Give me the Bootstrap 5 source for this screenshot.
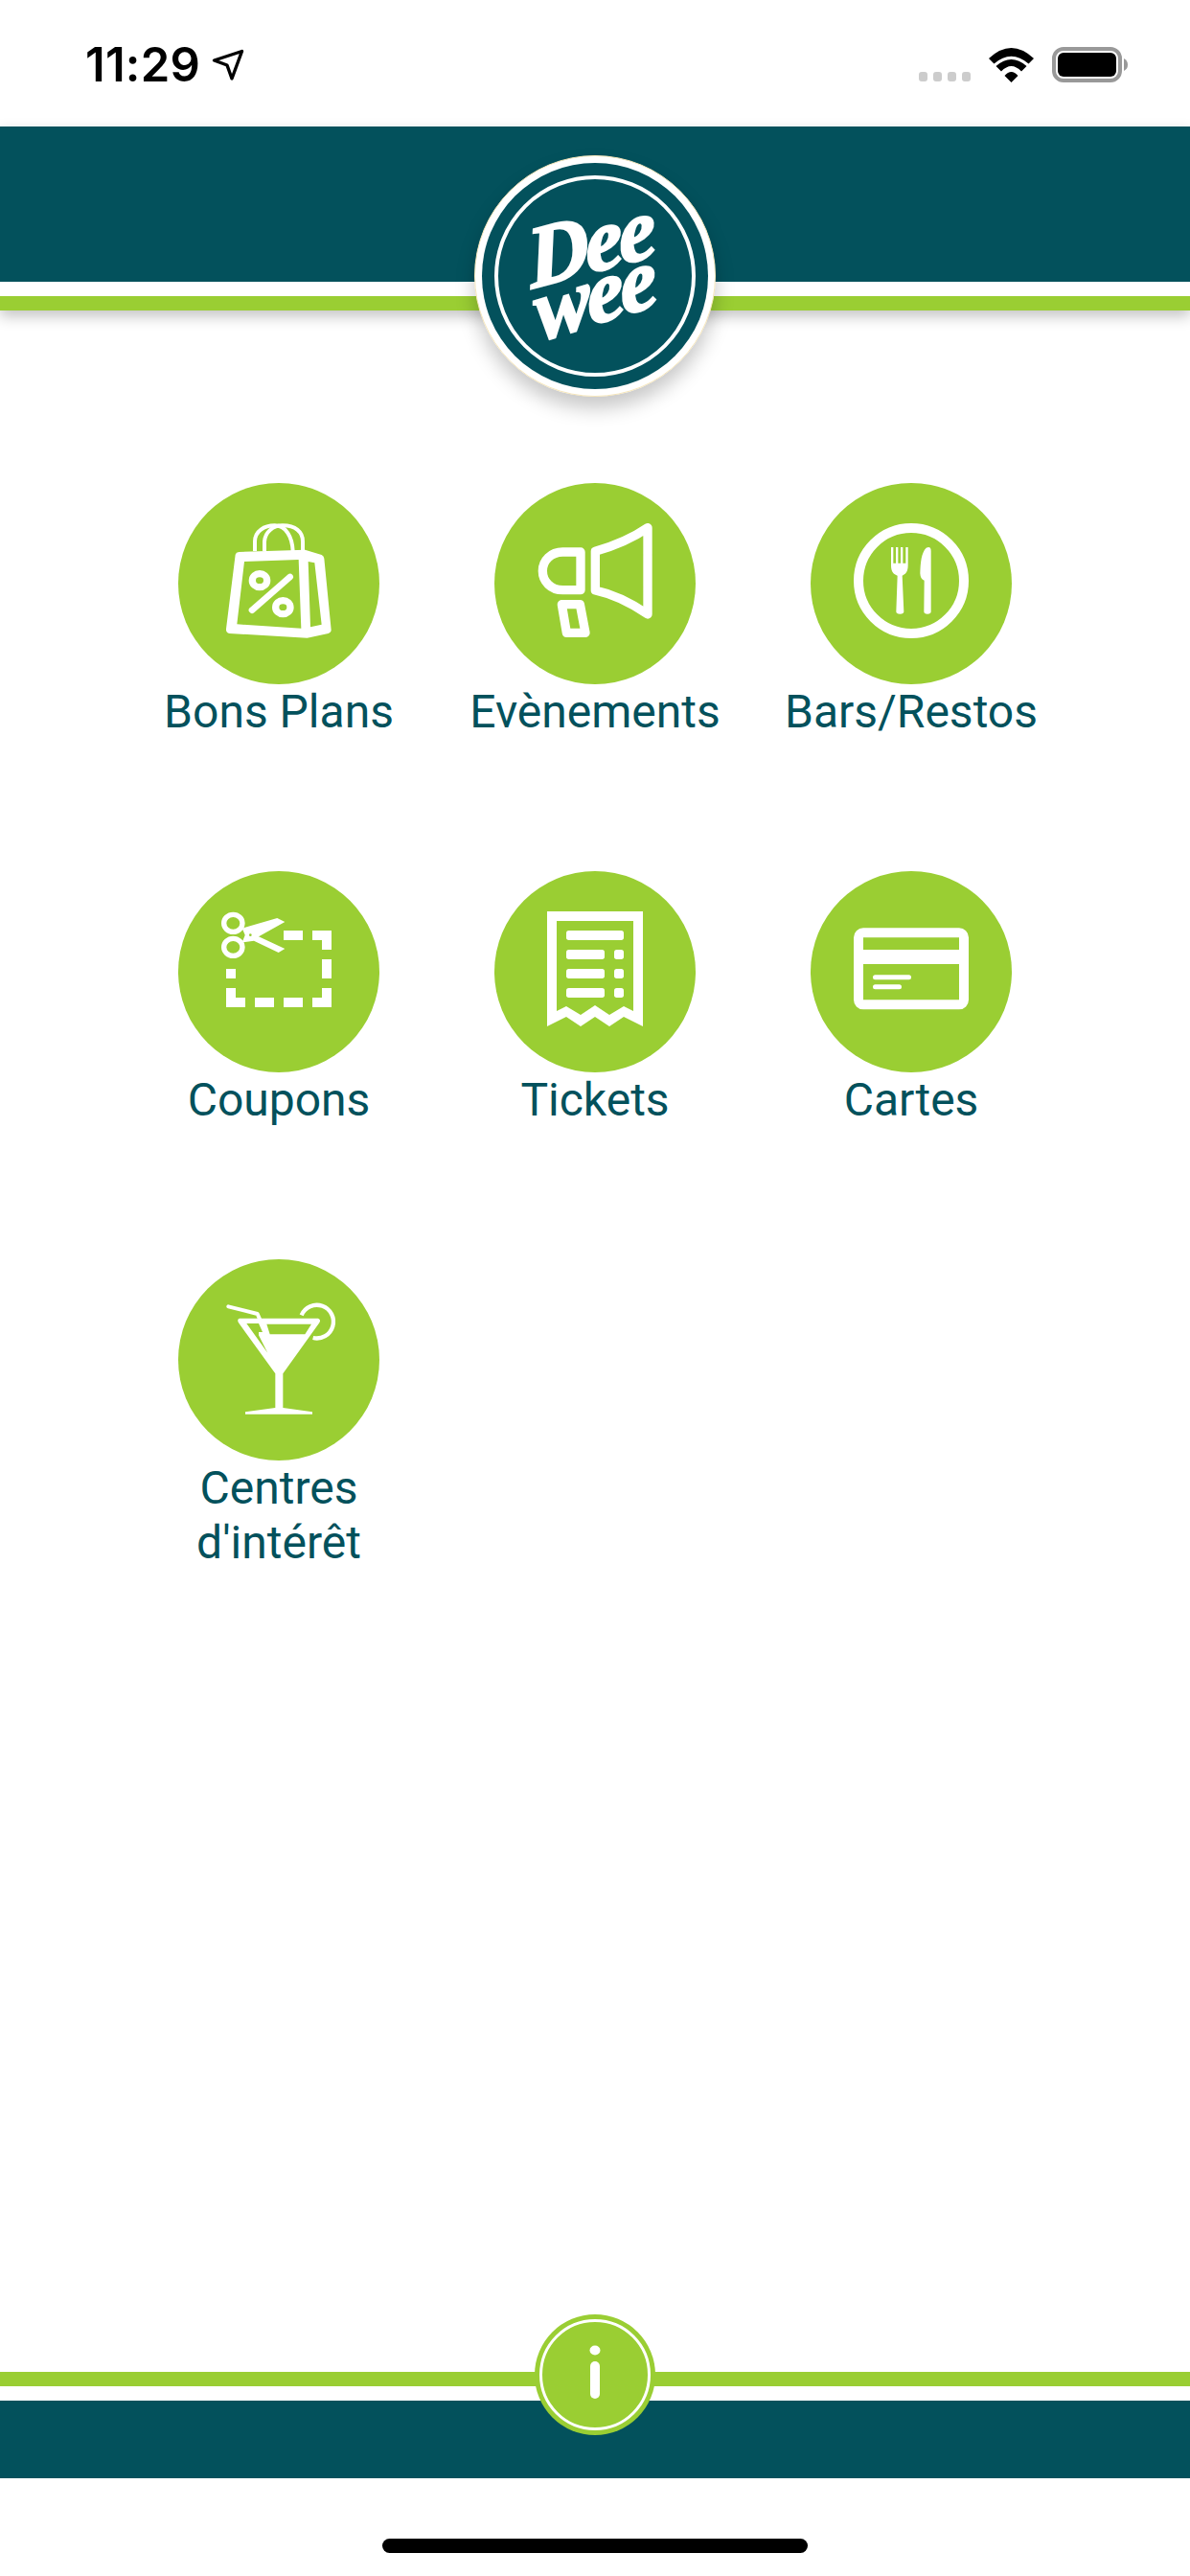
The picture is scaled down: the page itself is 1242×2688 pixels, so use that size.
<!DOCTYPE html>
<html lang="fr">
<head>
<meta charset="utf-8">
<title>DeeWee</title>
<link href="https://cdn.jsdelivr.net/npm/bootstrap@5.3.0/dist/css/bootstrap.min.css" rel="stylesheet">
<style>
html,body{width:1242px;height:2688px;overflow:hidden;background:#fff}
body{font-family:Roboto,"Liberation Sans",sans-serif;color:#03515c}
.dw-status{height:132px;padding:49px 65px 0 89px}
.dw-time{font-family:Inter,"Liberation Sans",sans-serif;font-weight:600;font-size:49px;line-height:37px;color:#000;letter-spacing:.2px}
.dw-arrow{margin-left:12px;margin-top:2px}
.dw-dots{gap:6px;margin-bottom:1px;margin-right:19px}
.dw-dot{width:9px;height:10px;border-radius:3px;background:#ccc}
.dw-wifi{margin-right:19px}
.dw-band-teal{height:162px;background:#03515c}
.dw-band-white{height:15px;background:#fff}
.dw-band-green{height:15px;background:#9ace33}
.dw-head{box-shadow:0 6px 14px rgba(0,0,0,.24)}
.dw-logo{top:30px;width:252px;height:252px;box-shadow:0 12px 20px rgba(0,0,0,.22)}
.dw-main{padding:180px 126px 0}
.dw-tile{height:405px}
.dw-disc{width:210px;height:210px;background:#9ace33}
.dw-label{font-size:48px;line-height:57px;color:#03515c}
.dw-foot-teal{height:81px;background:#03515c}
.dw-info{top:-60px;width:126px;height:126px}
.dw-safe{height:102px;padding-top:63px}
.dw-home{width:444px;height:15px;border-radius:8px;background:#000}
.dw-logo text{font-family:"Liberation Serif",serif;font-weight:700;font-style:italic;fill:#fff;stroke:#fff;stroke-width:2.5px}
</style>
</head>
<body>
<div class="vh-100 d-flex flex-column">

  <div class="dw-status d-flex justify-content-between align-items-start">
    <div class="d-flex align-items-start">
      <span class="dw-time">11:29</span>
      <svg class="dw-arrow" width="34" height="34" viewBox="0 0 34 34"><path d="M2.500 12 L31.500 2.500 L21 31 L16 17 Z" fill="none" stroke="#000" stroke-width="3.4" stroke-linejoin="round"/></svg>
    </div>
    <div class="d-flex align-items-end">
      <div class="dw-dots d-flex"><span class="dw-dot"></span><span class="dw-dot"></span><span class="dw-dot"></span><span class="dw-dot"></span></div>
      <svg class="dw-wifi" width="47" height="36" viewBox="0 0 47 36"><path d="M0 11 Q23.5 -11 47 11 L41.5 16.500 Q23.500 1 5.500 16.500Z M7.500 19 Q23.500 5 39.500 19 L34 24.500 Q23.500 13.500 13 24.500Z M23.500 36 L16.500 29 Q23.500 21 30.500 29Z" fill="#000"/></svg>
      <svg width="79" height="37" viewBox="0 0 79 37"><rect x="2" y="2" width="69" height="33" rx="10" fill="none" stroke="#999" stroke-width="4"/><rect x="6" y="6" width="61" height="25" rx="6" fill="#000"/><path d="M75 12 Q79 14 79 18.500 Q79 23 75 25Z" fill="#999"/></svg>
    </div>
  </div>

  <header class="position-relative">
    <div class="dw-head">
      <div class="dw-band-teal"></div>
      <div class="dw-band-white"></div>
      <div class="dw-band-green"></div>
    </div>
    <div class="dw-logo position-absolute start-50 translate-middle-x rounded-circle">
      <svg width="252" height="252" viewBox="0 0 252 252">
        <circle cx="126" cy="126" r="125.500" fill="#fff" stroke="#f6e6ba" stroke-width="1"/>
        <circle cx="126" cy="126" r="118" fill="#03515c"/>
        <circle cx="126" cy="126" r="103" fill="none" stroke="#fff" stroke-width="4"/>
        <text transform="translate(60 139) rotate(-15) skewX(-8)" font-size="90" letter-spacing="-4">Dee</text>
        <text transform="translate(68 194) rotate(-17) skewX(-8)" font-size="90" letter-spacing="-4">wee</text>
      </svg>
    </div>
  </header>

  <main class="dw-main flex-grow-1">
    <div class="row g-0">

      <div class="col-4 dw-tile d-flex flex-column align-items-center text-center">
        <div class="dw-disc rounded-circle">
          <svg width="210" height="210" viewBox="48 42 630 630" fill="#fff">
            <path fill-rule="evenodd" d="M238 258 L445 251 L497 267 Q504 270 505 278 L527 502 Q527 510 518 513 L452 527 L208 513 Q197 510 198 499 L227 266 Q229 259 238 258Z M255 288 L425 282 L433 497 L232 484Z M455 288 L475 292 L497 485 L462 493Z"/>
            <g fill="none" stroke="#fff" stroke-width="12">
              <path d="M288 255 V225 C288 192 318 175 350 175 C385 175 405 210 407 255"/>
              <path d="M318 255 V225 C320 195 345 175 375 175 C415 175 438 195 438 225 V255"/>
            </g>
            <g fill="none" stroke="#fff">
              <ellipse cx="303" cy="347" rx="23" ry="21" stroke-width="22"/>
              <ellipse cx="376" cy="431" rx="23" ry="21" stroke-width="22"/>
              <path d="M279 440 L398 336" stroke-width="20" stroke-linecap="round"/>
            </g>
          </svg>
        </div>
        <div class="dw-label">Bons Plans</div>
      </div>

      <div class="col-4 dw-tile d-flex flex-column align-items-center text-center">
        <div class="dw-disc rounded-circle">
          <svg width="210" height="210" viewBox="48 42 630 630" fill="none" stroke="#fff" stroke-width="28" stroke-linejoin="round">
            <path d="M364 256 C420 240 480 215 528 182 V453 C480 420 420 390 364 378 Z"/>
            <path d="M318 258 H262 C225 258 199 285 199 317 C199 350 225 377 262 377 H318 Z"/>
            <path d="M259 422 H316 L333 511 H274 Z"/>
          </svg>
        </div>
        <div class="dw-label">Evènements</div>
      </div>

      <div class="col-4 dw-tile d-flex flex-column align-items-center text-center">
        <div class="dw-disc rounded-circle">
          <svg width="210" height="210" viewBox="48 42 630 630" fill="#fff">
            <circle cx="363" cy="348" r="165" fill="none" stroke="#fff" stroke-width="30"/>
            <path d="M300 243h7v50h8v-50h7v50h8v-50h7v50h9v-50h7V300C353 320 345 328 335 332L340 445Q340 452 328 452Q316 452 316 445L320 332C308 328 300 320 300 300Z"/>
            <path d="M425 255V445Q425 452 414 452Q403 452 403 445L404 347Q392 345 391 325C392 290 395 260 410 245Q425 238 425 255Z"/>
          </svg>
        </div>
        <div class="dw-label">Bars/Restos</div>
      </div>

      <div class="col-4 dw-tile d-flex flex-column align-items-center text-center">
        <div class="dw-disc rounded-circle">
          <svg width="210" height="210" viewBox="48 27 630 630" fill="#fff">
            <g fill="none" stroke="#fff" stroke-width="16">
              <ellipse cx="220" cy="190" rx="29" ry="27"/>
              <ellipse cx="220" cy="265" rx="29" ry="27"/>
            </g>
            <path d="M248 206 L358 174 L382 186 L280 243 L262 238Z"/>
            <path d="M248 250 L262 216 L300 232 L382 270 L362 282 L285 245Z"/>
            <circle cx="274" cy="227" r="4" fill="#9ace33"/>
            <path d="M378 213h60v30h-60Z M468 213h60v60h-30v-30h-30Z M498 303h30v60h-30Z M198 333h30v30h-30Z M198 393h30v30h30v30h-60Z M288 423h60v30h-60Z M378 423h60v30h-60Z M498 393h30v60h-60v-30h30Z"/>
          </svg>
        </div>
        <div class="dw-label">Coupons</div>
      </div>

      <div class="col-4 dw-tile d-flex flex-column align-items-center text-center">
        <div class="dw-disc rounded-circle">
          <svg width="210" height="210" viewBox="48 27 630 630" fill="#fff">
            <path fill-rule="evenodd" d="M213 153H513V513L453 483L408 513L363 483L318 513L273 483L213 513Z M243 183V465L273 450L318 477L363 447L408 477L453 450L483 465V183Z"/>
            <rect x="273" y="213" width="180" height="30" rx="8"/>
            <rect x="273" y="273" width="120" height="30" rx="8"/>
            <rect x="423" y="273" width="30" height="30" rx="8"/>
            <rect x="273" y="333" width="120" height="30" rx="8"/>
            <rect x="423" y="333" width="30" height="30" rx="8"/>
            <rect x="273" y="393" width="120" height="30" rx="8"/>
            <rect x="423" y="393" width="30" height="30" rx="8"/>
          </svg>
        </div>
        <div class="dw-label">Tickets</div>
      </div>

      <div class="col-4 dw-tile d-flex flex-column align-items-center text-center">
        <div class="dw-disc rounded-circle">
          <svg width="210" height="210" viewBox="48 27 630 630" fill="#fff">
            <rect x="198" y="220" width="330" height="225" rx="15" fill="none" stroke="#fff" stroke-width="30"/>
            <rect x="198" y="273" width="330" height="45"/>
            <rect x="243" y="352" width="120" height="15" rx="7.500"/>
            <rect x="243" y="382" width="90" height="15" rx="7.500"/>
          </svg>
        </div>
        <div class="dw-label">Cartes</div>
      </div>

      <div class="col-4 dw-tile d-flex flex-column align-items-center text-center">
        <div class="dw-disc rounded-circle">
          <svg width="210" height="210" viewBox="48 42 630 630" fill="#fff">
            <path fill-rule="evenodd" d="M240 227H486Q496 230 490 241L376 400V507L468 520V527H258V520L352 507V400L237 241Q231 230 240 227Z M262 243L328 335L300 280V270H312L300 243Z M325 245H465L445 277H335Z"/>
            <path d="M205 190L296 213L325 280" fill="none" stroke="#fff" stroke-width="12" stroke-linecap="round" stroke-linejoin="round"/>
            <path d="M434 217A52 52 0 1 1 470 288" fill="none" stroke="#fff" stroke-width="13"/>
          </svg>
        </div>
        <div class="dw-label">Centres d'intérêt</div>
      </div>

    </div>
  </main>

  <footer class="position-relative">
    <div class="dw-band-green"></div>
    <div class="dw-band-white"></div>
    <div class="dw-foot-teal"></div>
    <div class="dw-info position-absolute start-50 translate-middle-x">
      <svg width="126" height="126" viewBox="0 0 126 126">
        <circle cx="63" cy="63" r="63" fill="#9ace33"/>
        <circle cx="63" cy="63" r="56.500" fill="none" stroke="#fff" stroke-width="3"/>
        <ellipse cx="63" cy="37.500" rx="5.500" ry="5" fill="#fff"/>
        <rect x="58" y="49" width="10" height="39" rx="5" fill="#fff"/>
      </svg>
    </div>
    <div class="dw-safe d-flex justify-content-center"><div class="dw-home"></div></div>
  </footer>

</div>
<script src="https://cdn.jsdelivr.net/npm/bootstrap@5.3.0/dist/js/bootstrap.bundle.min.js"></script>
</body>
</html>
